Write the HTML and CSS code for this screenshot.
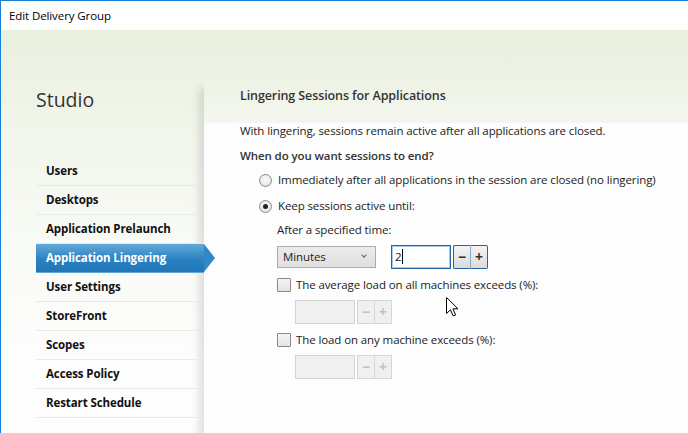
FILE: index.html
```html
<!DOCTYPE html>
<html lang="en">
<head>
    <meta charset="UTF-8">
    <title>Edit Delivery Group</title>
    <link rel="stylesheet" href="styles.css">
</head>
<body>
    <div class="window">
        <div class="titlebar">Edit Delivery Group</div>

        <div class="frame">
            <nav class="sidebar">
                <div class="brand">Studio</div>
                <ul class="steps">
                    <li>Users</li>
                    <li>Desktops</li>
                    <li>Application Prelaunch</li>
                    <li class="active">Application Lingering</li>
                    <li>User Settings</li>
                    <li>StoreFront</li>
                    <li>Scopes</li>
                    <li>Access Policy</li>
                    <li>Restart Schedule</li>
                </ul>
            </nav>

            <main class="panel">
                <h2 class="panel-title">Lingering Sessions for Applications</h2>
                <div class="panel-body">
                    <p class="intro">With lingering, sessions remain active after all applications are closed.</p>
                    <p class="question">When do you want sessions to end?</p>

                    <div class="option first"><span class="radio"></span>Immediately after all applications in the session are closed (no lingering)</div>
                    <div class="option second"><span class="radio checked"></span>Keep sessions active until:</div>

                    <div class="sub">
                        <div class="caption">After a specified time:</div>
                        <div class="time-row">
                            <div class="select">Minutes<span class="chevron"></span></div>
                            <div class="spinner focused">
                                <div class="num">2<span class="caret"></span></div>
                                <div class="spin-btns"><span>&minus;</span><span>+</span></div>
                            </div>
                        </div>

                        <div class="option check-row"><span class="check"></span>The average load on all machines exceeds (%):</div>
                        <div class="spinner disabled">
                            <div class="num"></div>
                            <div class="spin-btns"><span>&minus;</span><span>+</span></div>
                        </div>

                        <div class="option check-row"><span class="check"></span>The load on any machine exceeds (%):</div>
                        <div class="spinner disabled">
                            <div class="num"></div>
                            <div class="spin-btns"><span>&minus;</span><span>+</span></div>
                        </div>
                    </div>
                </div>
            </main>
        </div>

        <svg class="cursor" width="13" height="20" viewBox="0 0 13 20">
            <path d="M0.5 0.5 L0.5 16.5 L4.5 12.8 L7.2 19 L9.6 18 L7 11.8 L12 11.8 Z" fill="#fff" stroke="#000" stroke-width="1"/>
        </svg>
    </div>
</body>
</html>
```

FILE: styles.css
```css
body {
    margin: 0;
    font-family: 'Open Sans', 'Noto Sans', sans-serif;
    font-size: 11.5px;
    letter-spacing: -0.1px;
    color: #222;
}
.window {
    position: relative;
    width: 687px;
    height: 432px;
    border-top: 1px solid #1a7fd6;
    border-left: 1px solid #1a7fd6;
    overflow: hidden;
    background: #fff;
}
.titlebar {
    height: 29px;
    line-height: 30px;
    padding-left: 8px;
    color: #000;
    background: #fff;
}
.frame {
    display: flex;
    height: 403px;
    background: linear-gradient(#e9f0de 0, #f1f5ea 90px, #f9fbf6 220px, #fdfdfd 330px);
}
.sidebar {
    position: relative;
    z-index: 2;
    width: 203px;
    padding: 58px 0 0 35px;
    box-sizing: border-box;
    flex: none;
}
.brand {
    font-size: 19.5px;
    line-height: 24px;
    letter-spacing: 0;
    color: #333;
}
.steps {
    list-style: none;
    margin: 45px 0 0;
    padding: 0;
}
.steps li {
    position: relative;
    height: 28px;
    line-height: 28px;
    padding-left: 10px;
    border-bottom: 1px solid #e8eae6;
    font-weight: bold;
    color: #111;
}
.steps li.active {
    color: #fff;
    border-bottom-color: transparent;
    background: linear-gradient(#62a9d8, #2b82c2 55%, #1f76b8);
}
.steps li.active::after {
    content: "";
    position: absolute;
    top: 0;
    right: -11px;
    border-top: 14.5px solid transparent;
    border-bottom: 14.5px solid transparent;
    border-left: 11px solid #3088c6;
}
.panel {
    flex: 1;
    margin-top: 52px;
    background: #fdfdfd;
    box-shadow: -5px 6px 8px rgba(0, 0, 0, 0.12);
}
.panel-title {
    margin: 0;
    height: 36px;
    padding: 5px 0 0 36px;
    font-size: 12.5px;
    line-height: 18px;
    font-weight: 600;
    color: #333;
    background: linear-gradient(#eef3e5, #f4f7ef);
}
.panel-body {
    padding: 0 0 0 36px;
}
.panel-body p {
    margin: 0;
    line-height: 16px;
}
.question {
    margin-top: 9px !important;
    font-weight: 600;
    color: #333;
}
.option {
    display: flex;
    align-items: center;
    height: 16px;
    line-height: 16px;
}
.option.first {
    margin-top: 8px;
    padding-left: 19px;
}
.option.second {
    margin-top: 10px;
    padding-left: 19px;
}
.radio {
    width: 11px;
    height: 11px;
    margin-right: 6px;
    border: 1px solid #8a8a8a;
    border-radius: 50%;
    background: radial-gradient(circle at 50% 40%, #fafafa, #dedede);
    display: flex;
    align-items: center;
    justify-content: center;
}
.radio.checked::before {
    content: "";
    width: 5px;
    height: 5px;
    border-radius: 50%;
    background: #222;
}
.sub {
    padding-left: 37px;
}
.caption {
    margin-top: 8px;
    line-height: 16px;
}
.time-row {
    display: flex;
    align-items: center;
    margin-top: 7px;
}
.select {
    position: relative;
    width: 92px;
    height: 20px;
    line-height: 20px;
    padding-left: 5px;
    border: 1px solid #acacac;
    background: linear-gradient(#ebebeb, #e0e0e0);
}
.chevron {
    position: absolute;
    right: 9px;
    top: 6px;
    width: 3px;
    height: 3px;
    border-right: 1px solid #666;
    border-bottom: 1px solid #666;
    transform: rotate(45deg);
}
.spinner {
    display: flex;
    height: 24px;
}
.focused {
    margin-left: 15px;
}
.num {
    line-height: 22px;
    padding-left: 3px;
    box-sizing: border-box;
    width: 60px;
    height: 24px;
    border: 1px solid #d3d3d3;
    background: #f0f0f0;
}
.focused .num {
    border-color: #2563a5;
    background: #fff;
    box-shadow: inset 0 0 0 1px #a8cbec;
    color: #111;
}
.caret {
    display: inline-block;
    width: 1px;
    height: 15px;
    margin-left: 1px;
    vertical-align: -3px;
    background: #000;
}
.spin-btns {
    display: flex;
    margin-left: 2px;
}
.spin-btns span {
    width: 16px;
    height: 22px;
    line-height: 21px;
    text-align: center;
    font-weight: bold;
    font-size: 14px;
    border: 1px solid #d6d6d6;
    background: #f0f0f0;
    color: #c2c2c2;
}
.spin-btns span + span {
    border-left: none;
}
.focused .spin-btns span {
    border-color: #2563a5;
    background: linear-gradient(#f3f3f3, #dcdcdc);
    color: #333;
}
.focused .spin-btns span:first-child {
    border-radius: 2px 0 0 2px;
    border-right: 1px solid #8aa9c8;
}
.focused .spin-btns span:last-child {
    border-radius: 0 2px 2px 0;
}
.check-row {
    margin-top: 8px;
}
.check {
    width: 12px;
    height: 12px;
    margin-right: 5px;
    border: 1px solid #8a8a8a;
    border-radius: 1px;
    background: linear-gradient(#f4f4f4, #e4e4e4);
}
.disabled {
    margin: 7px 0 0 18px;
}
.cursor {
    position: absolute;
    left: 445px;
    top: 296px;
}
```
